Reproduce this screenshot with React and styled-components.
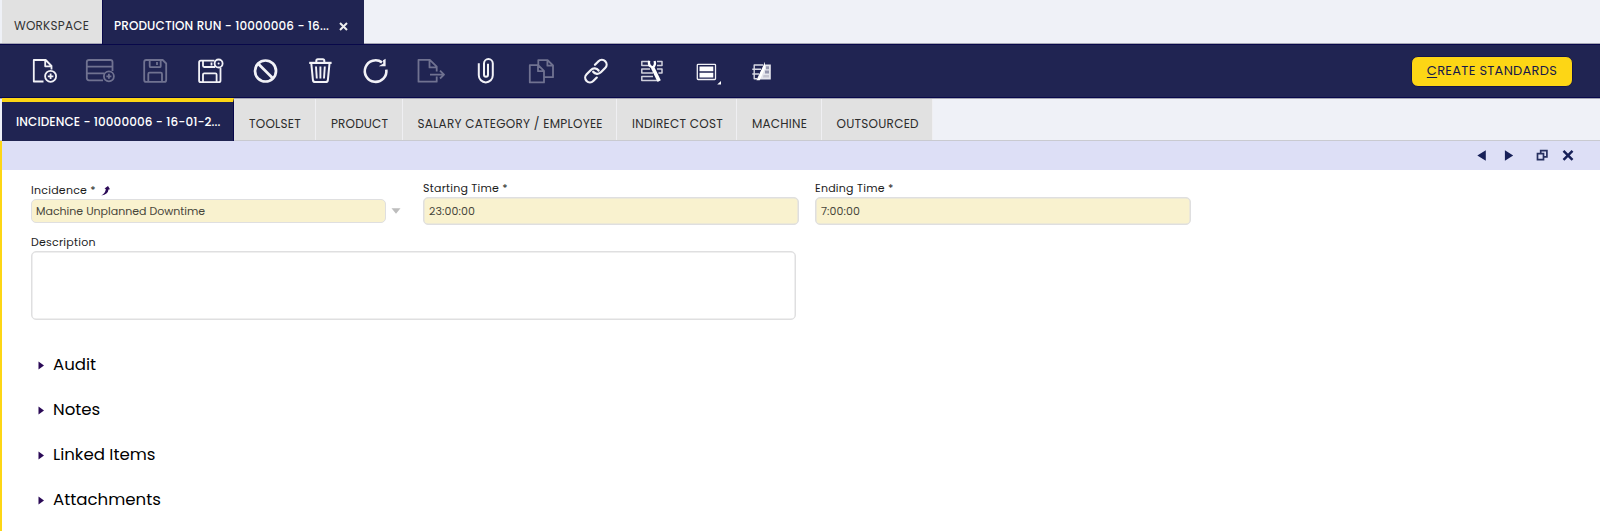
import React from "react";
import styled, { createGlobalStyle } from "styled-components";

const navy = "#202452";
const yellow = "#fdd615";

const GlobalStyle = createGlobalStyle`
  * { box-sizing: border-box; }
  body {
    margin: 0;
    background: #fff;
    font-family: Poppins, Inter, "Liberation Sans", sans-serif;
  }
`;

const Page = styled.div`
  display: flex;
  flex-direction: column;
  height: 531px;
  overflow: hidden;
`;

const WindowTabs = styled.div`
  display: flex;
  height: 44px;
  padding-left: 2px;
  background: #eff1f7;
  box-shadow: inset 0 -1px #a5a6b4;
`;

const WindowTab = styled.div`
  display: flex;
  align-items: center;
  width: ${(p) => p.$w}px;
  height: ${(p) => (p.$active ? 44 : 43)}px;
  padding: ${(p) => (p.$active ? "8px 0 0 11px" : "9px 0 0 12px")};
  font-size: 12px;
  white-space: nowrap;
  letter-spacing: ${(p) => p.$track || 0}px;
  color: ${(p) => (p.$active ? "#fff" : "#333")};
  background: ${(p) => (p.$active ? navy : "#e1e1e1")};
  border-left: ${(p) => (p.$active ? "1px solid #08084a" : "0")};
  font-weight: ${(p) => (p.$active ? 500 : 400)};
`;

const CloseIcon = styled.svg`
  margin-left: auto;
  margin-right: 16px;
`;

const Toolbar = styled.div`
  display: flex;
  align-items: center;
  height: 54px;
  padding: 0 27px 0 17px;
  background: ${navy};
  border-top: 1px solid #08084a;
  border-bottom: 1px solid #08084a;
`;

const Tool = styled.svg`
  flex: none;
  width: 55px;
  height: 55px;
  fill: none;
  stroke: #f2f2f7;
  stroke-width: 1.8;
  stroke-linejoin: round;
  opacity: ${(p) => (p.$disabled ? 0.38 : 1)};
`;

const ActionButton = styled.button`
  width: 162px;
  height: 31px;
  margin-left: auto;
  padding: 0 0 1px;
  border: 1px solid #14164a;
  border-radius: 7px;
  background: ${yellow};
  color: #17194a;
  font: 400 13px Poppins, Inter, sans-serif;
  letter-spacing: ${(p) => p.$track}px;
  white-space: nowrap;
`;

const Key = styled.span`
  text-decoration: underline;
  text-underline-offset: 2px;
`;

const TabBar = styled.div`
  display: flex;
  height: 43px;
  padding-left: 2px;
  background: #eff1f7;
  border-top: 1px solid #a5a6b4;
  border-bottom: 1px solid #c9cad0;
`;

const Tab = styled.div`
  width: ${(p) => p.$w}px;
  padding: 17px 0 0 15px;
  border-right: 1px solid #efeff2;
  background: #e1e1e1;
  color: #2c2c2c;
  font-size: 12px;
  line-height: 16px;
  letter-spacing: ${(p) => p.$track || 0}px;
  white-space: nowrap;
`;

const ActiveTab = styled(Tab)`
  height: 43px;
  margin-top: -1px;
  padding: 12px 0 0 14px;
  border-top: 4px solid ${yellow};
  border-right: 1px solid #08084a;
  background: ${navy};
  color: #fff;
  font-weight: 500;
`;

const Panel = styled.main`
  flex: 1;
  border-left: 2px solid ${yellow};
`;

const PanelHeader = styled.div`
  display: flex;
  justify-content: flex-end;
  height: 29px;
  padding-right: 26px;
  background: #dddff6;
`;

const Form = styled.div`
  display: grid;
  grid-template-columns: 392px 392px 376px;
  grid-template-rows: 54px 96px;
  padding: 10px 0 0 29px;
`;

const Field = styled.div`
  grid-column: span ${(p) => p.$span || 1};
  padding-top: ${(p) => p.$top || 0}px;
`;

const Label = styled.div`
  display: flex;
  align-items: center;
  height: 17px;
  padding-bottom: 1px;
  color: #1c1c1c;
  font-size: 11px;
  letter-spacing: 0.25px;
`;

const LinkArrow = styled.svg`
  margin-left: 5px;
`;

const FieldRow = styled.div`
  display: flex;
  align-items: center;
`;

const Input = styled.div`
  display: flex;
  align-items: center;
  width: ${(p) => p.$w}px;
  height: ${(p) => p.$h}px;
  padding-left: ${(p) => p.$pad || 4}px;
  border: 1px solid #dfdfe0;
  border-radius: 5px;
  background: #f9f2cf;
  color: #48463b;
  font-size: 11px;
`;

const TimeInput = styled(Input)`
  box-shadow: inset 0 0 0 0.5px #dfdfe0;
  letter-spacing: 0.1px;
`;

const PickerArrow = styled.svg`
  margin-left: 5px;
`;

const TextArea = styled.div`
  width: 765px;
  height: 69px;
  border: 1px solid #dfdfe0;
  box-shadow: inset 0 0 0 0.5px #dfdfe0;
  border-radius: 5px;
`;

const Sections = styled.div`
  padding: 12px 0 0 36px;
`;

const Section = styled.div`
  display: flex;
  align-items: center;
  gap: 8px;
  height: 45px;
  color: #000;
  font-size: 16.6px;
`;

const SectionMark = styled.svg`
  position: relative;
  top: 1px;
`;

const wrenchHead = "M27.2 17.8q-1.4 5 3.4 6.6 3.400-2 2-6.400";
const wrenchHandle = "M30.6 24.500l6.600 13.600";

const tools = [
  {
    name: "new",
    art: (
      <>
        <path d="M26.5 38.5H16.8V17H28.7L34.5 23V26.5M28.2 17.5V23.3H34" />
        <circle cx="33.6" cy="33.3" r="5.5" />
        <path d="M30.8 33.3h5.6M33.6 30.5v5.6" />
      </>
    ),
  },
  {
    name: "new-row",
    disabled: true,
    art: (
      <>
        <path d="M31 37.3H17q-2.2 0-2.2-2.2V19q0-2 2.2-2h21.3q2.2 0 2.2 2v9M14.8 23.6h25.7M14.8 30.3h17.4" />
        <circle cx="36.9" cy="33.3" r="5" />
        <path d="M34.4 33.3h5M36.9 30.8v5" />
      </>
    ),
  },
  {
    name: "save",
    disabled: true,
    art: (
      <path d="M19.2 17h16.5l3.5 3.5v16.4q0 2-2 2h-18q-2 0-2-2V19q0-2 2-2zM22.7 17v6.2q0 1 1 1h9q1 0 1-1V17M30 19v3M21.3 38.9v-8q0-1.2 1.2-1.2h11.3q1.2 0 1.2 1.2v8" />
    ),
  },
  {
    name: "save-close",
    art: (
      <>
        <path d="M32.5 17.6H18.8q-1.7 0-1.7 1.7v18.2q0 1.7 1.7 1.7h18q1.7 0 1.7-1.7V25M21 17.6v5.2q0 1.2 1.2 1.2h11M29.5 19.5v3M21 39v-7.4q0-1.2 1.2-1.2h11.2q1.2 0 1.2 1.2V39" />
        <circle cx="36.6" cy="20.5" r="4" />
        <circle cx="36.6" cy="20.5" r="1" fill="#f2f2f7" stroke="none" />
      </>
    ),
  },
  {
    name: "cancel",
    art: (
      <g strokeWidth="2.7">
        <circle cx="28.5" cy="28" r="10.5" />
        <path d="M21.2 20.7l14.6 14.6" />
      </g>
    ),
  },
  {
    name: "delete",
    art: (
      <>
        <path d="M17.2 19.9h22.4" strokeWidth="2.2" />
        <path d="M24.3 19v-1.3q0-1.5 1.5-1.5h5q1.5 0 1.5 1.5V19M19.3 20.5l1.6 16.3q.2 2.3 2.5 2.3h10q2.3 0 2.5-2.3l1.6-16.3" strokeWidth="2" />
        <path d="M24 23.5l.8 12M28.4 23.5v12M32.8 23.5l-.8 12" strokeWidth="1.9" />
      </>
    ),
  },
  {
    name: "refresh",
    art: (
      <>
        <path d="M39.3 26.6A10.8 10.8 0 1 1 35 19.4" strokeWidth="2.6" />
        <path d="M31.8 23.3h6.8V15.8l-2.6 1.4.3 3.2z" stroke="none" fill="#f2f2f7" />
      </>
    ),
  },
  {
    name: "export",
    disabled: true,
    art: (
      <path d="M34.7 33.5v5.2H16.5V16.8h11.3l6.9 6.8v5M27.5 17v7.4h7M28 31.6h14M38 27.7l4 3.9-4 3.9" />
    ),
  },
  {
    name: "attach",
    art: (
      <path
        d="M21.8 20.2v12a7 7.2 0 0 0 14 0V20.5a4.4 4.4 0 0 0-8.8 0V31.7a2 2 0 0 0 4 0V20.7"
        strokeWidth="2"
      />
    ),
  },
  {
    name: "copy",
    disabled: true,
    art: (
      <>
        <path d="M17.8 22.2h8.4l5.8 5.7v11.5H17.8zM26 22.4v5.8h5.8" />
        <path d="M26.3 22V17.1h9.3l5.4 5.4v11.7h-9M35.4 17.3v5.4H41" />
      </>
    ),
  },
  {
    name: "link",
    art: (
      <g transform="translate(16.2 15.2) scale(1.07)" strokeWidth="2.1" strokeLinecap="round">
        <path d="M9.3 12.7a4.8 4.8 0 0 0 7.2.5l4-4a4.4 4.4 0 0 0-6.2-6.4l-3.3 3.3" />
        <path d="M14.4 11.5a4.8 4.8 0 0 0-7.2-.5l-4 4a4.4 4.4 0 0 0 6.2 6.3l3.3-3.2" />
      </g>
    ),
  },
  {
    name: "process",
    art: (
      <>
        <path
          d="M26 18.6h-6.2v4H27M35 18.6h5v4h-5M28 26H19.8v4H31M35 26h5v4h-3.500M31 33.600H19.800v4H35"
          stroke="#cfd0dc"
          strokeWidth="1.5"
        />
        <path d={wrenchHead} stroke="#fff" strokeWidth="2.300" />
        <path d={wrenchHandle} stroke="#fff" strokeWidth="3.600" />
      </>
    ),
  },
  {
    name: "layout",
    art: (
      <>
        <rect x="20.3" y="21.3" width="18.2" height="15.2" rx=".8" strokeWidth="1.3" />
        <path d="M22.5 23.4h13.8v4.9H22.5zM22.5 29.8h13.8v4.8H22.5z" fill="#fff" stroke="none" />
        <path d="M44 38v3.6h-3.8z" fill="#fff" stroke="none" />
      </>
    ),
  },
  {
    name: "toggle-layout",
    art: (
      <>
        <path d="M31 22h-8.800v13.800H25M20.300 26.300H29M20.300 31H27" stroke="#d8d9e3" strokeWidth="1.4" />
        <path d="M33 21.400h5.800V36.400H26z" fill="#e4e5ec" stroke="none" />
        <path d="M34 23.300h3v2.900h-3zM33 27.600h4v2.800h-4z" fill="#9496ad" stroke="none" />
        <path d="M31.500 31.900h5.500v2.700h-6z" fill="#c3c4d0" stroke="none" />
        <path d="M33 18.800l-8.600 18.500h3.400l5.200-12z" fill="#fff" stroke="none" />
      </>
    ),
  },
];

const tabs = [
  { text: "TOOLSET", w: 82, track: 0.24 },
  { text: "PRODUCT", w: 86.5, track: 0.15 },
  { text: "SALARY CATEGORY / EMPLOYEE", w: 214.5, track: 0.26 },
  { text: "INDIRECT COST", w: 120, track: 0.28 },
  { text: "MACHINE", w: 84.5, track: 0.22 },
  { text: "OUTSOURCED", w: 111.5, track: 0.25 },
];

const sections = ["Audit", "Notes", "Linked Items", "Attachments"];

export default function App() {
  return (
    <Page>
      <GlobalStyle />
      <WindowTabs>
        <WindowTab $w={100} $track={0.22}>WORKSPACE</WindowTab>
        <WindowTab $w={262} $track={0.12} $active>
          PRODUCTION RUN - 10000006 - 16...
          <CloseIcon width="9" height="9" viewBox="0 0 9 9">
            <path d="M1 1l7 7M8 1L1 8" stroke="#eee" strokeWidth="2" />
          </CloseIcon>
        </WindowTab>
      </WindowTabs>
      <Toolbar>
        {tools.map((t) => (
          <Tool key={t.name} viewBox="0 1 55 55" $disabled={t.disabled}>
            {t.art}
          </Tool>
        ))}
        <ActionButton $track={0.28}>
          <Key>C</Key>REATE STANDARDS
        </ActionButton>
      </Toolbar>
      <TabBar>
        <ActiveTab $w={232} $track={0.1}>INCIDENCE - 10000006 - 16-01-2...</ActiveTab>
        {tabs.map((t) => (
          <Tab key={t.text} $w={t.w} $track={t.track}>
            {t.text}
          </Tab>
        ))}
      </TabBar>
      <Panel>
        <PanelHeader>
          <svg width="98" height="29" viewBox="0 0 98 29" fill="#172058">
            <path d="M1.3 14.5l8.5-5.2v10.4zM37.2 14.5l-8.3-5.2v10.4z" />
            <path
              d="M61.5 12.6h6v6h-6zM64.7 12v-2.400h6.200v6.200h-2.800"
              fill="none"
              stroke="#27305f"
              strokeWidth="1.7"
            />
            <path d="M87.5 9.8l9 9M96.5 9.8l-9 9" stroke="#172058" strokeWidth="2.5" />
          </svg>
        </PanelHeader>
        <Form>
          <Field $top={2}>
            <Label>
              Incidence *
              <LinkArrow width="9" height="11" viewBox="0 0 9 11">
                <path d="M3.5 3.4L7 1.1l2 3.200-1.500.2Q7 9.600.3 10.500 4.500 8 4.800 4z" fill="#2b0a57" />
              </LinkArrow>
            </Label>
            <FieldRow>
              <Input $w={355} $h={24}>Machine Unplanned Downtime</Input>
              <PickerArrow width="10" height="6" viewBox="0 0 10 6">
                <path d="M.5 .3h9L5 5.7z" fill="#bdbdbd" />
              </PickerArrow>
            </FieldRow>
          </Field>
          <Field>
            <Label>Starting Time *</Label>
            <TimeInput $w={376} $h={28} $pad={5}>23:00:00</TimeInput>
          </Field>
          <Field>
            <Label>Ending Time *</Label>
            <TimeInput $w={376} $h={28} $pad={5}>7:00:00</TimeInput>
          </Field>
          <Field $span={2}>
            <Label>Description</Label>
            <TextArea />
          </Field>
        </Form>
        <Sections>
          {sections.map((s) => (
            <Section key={s}>
              <SectionMark width="7" height="9" viewBox="0 0 7 9">
                <path d="M.5 .5l5.5 4L.5 8.5z" fill="#2b0a57" />
              </SectionMark>
              {s}
            </Section>
          ))}
        </Sections>
      </Panel>
    </Page>
  );
}
